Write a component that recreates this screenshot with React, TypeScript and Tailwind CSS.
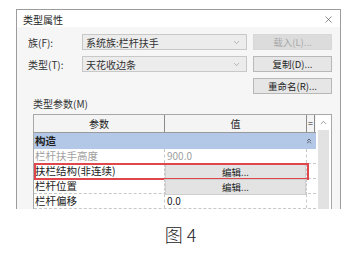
import { ChevronDown, ChevronUp, ChevronsUp, X } from "lucide-react";

const font = { fontFamily: '"Noto Sans CJK SC", "Noto Sans", sans-serif' };

function Dropdown({ value }: { value: string }) {
  return (
    <div className="flex h-[16px] w-[165px] items-center justify-between border border-[#c8c8c8] bg-[#ececec] pl-[3px] pr-[5px] text-[10px] text-[#333]">
      <span>{value}</span>
      <ChevronDown className="h-[9px] w-[9px] text-[#888]" strokeWidth={1.5} />
    </div>
  );
}

function Btn({ label, disabled }: { label: string; disabled?: boolean }) {
  return (
    <div
      className={`flex h-[16px] w-[79px] items-center justify-center border text-[9.5px] ${
        disabled
          ? "border-[#d8d8d8] bg-[#dcdcdc] text-[#a8a8a8]"
          : "border-[#b8b8b8] bg-[#e6e6e6] text-[#222]"
      }`}
    >
      {label}
    </div>
  );
}

function Row({
  name,
  value,
  muted,
  edit,
  highlight,
}: {
  name: string;
  value?: string;
  muted?: boolean;
  edit?: boolean;
  highlight?: boolean;
}) {
  return (
    <div className="relative grid h-[15px] grid-cols-[131px_142px_8px] border-b border-dashed border-[#c8c8c8] text-[10.5px] leading-[14px]">
      <div className={`border-r border-dashed border-[#c8c8c8] pl-[1px] ${muted ? "text-[#a0a0a0]" : "text-[#222]"}`}>
        {name}
      </div>
      <div className={`border-r border-dashed border-[#c8c8c8] ${muted ? "text-[#a0a0a0]" : "text-[#222]"}`}>
        {edit ? (
          <div className="flex h-full items-center justify-center border border-[#cfcfcf] bg-[#e3e3e3] text-[9.5px]">
            编辑...
          </div>
        ) : (
          <span className="pl-[2px] text-[10px]">{value}</span>
        )}
      </div>
      <div />
      {highlight && (
        <div className="absolute -top-[1px] left-0 h-[17px] w-[275px] border-2 border-[#e0474c]" />
      )}
    </div>
  );
}

export default function App() {
  return (
    <div className="h-[260px] w-[361px] overflow-hidden bg-white pt-[9px]" style={font}>
      <div className="ml-[16px] flex h-[200px] w-[325px] flex-col border-x border-t border-[#9c9c9c] bg-[#f6f6f6]">
        <div className="flex h-[24px] items-center justify-between bg-white pl-[6px] pr-[6px] pt-[2px] text-[10px] text-[#222]">
          <span>类型属性</span>
          <X className="h-[11px] w-[11px] text-[#444]" strokeWidth={1.3} />
        </div>

        <div className="flex flex-col gap-[6px] pl-[11px] pr-[8px] pt-[7px]">
          <div className="flex items-center">
            <span className="w-[54px] text-[10px] text-[#333]">族(F):</span>
            <Dropdown value="系统族:栏杆扶手" />
            <div className="ml-[6px]">
              <Btn label="载入(L)..." disabled />
            </div>
          </div>
          <div className="flex items-center">
            <span className="w-[54px] text-[10px] text-[#333]">类型(T):</span>
            <Dropdown value="天花收边条" />
            <div className="ml-[6px]">
              <Btn label="复制(D)..." />
            </div>
          </div>
          <div className="flex justify-end">
            <Btn label="重命名(R)..." />
          </div>
        </div>

        <div className="mt-[3px] pl-[16px] text-[10px] leading-[14px] text-[#333]">类型参数(M)</div>

        <div className="ml-[16px] mt-[3px] flex w-[299px] flex-1 border border-b-0 border-[#a8a8a8] bg-white">
          <div className="w-[282px]">
            <div className="grid h-[18px] grid-cols-[131px_142px_8px] border-b border-[#9a9a9a] bg-[#f4f4f4] text-[10px] text-[#222]">
              <div className="flex items-center justify-center border-r border-[#8a8a8a]">参数</div>
              <div className="flex items-center justify-center border-r border-[#8a8a8a]">值</div>
              <div className="flex items-center justify-center border-r border-[#8a8a8a] text-[9px]">=</div>
            </div>
            <div className="flex h-[16px] items-center justify-between bg-[#b3c8e6] pl-[1px] pr-[3px] text-[10.5px] font-bold text-[#222]">
              <span>构造</span>
              <ChevronsUp className="h-[8px] w-[8px] text-[#333]" strokeWidth={2} />
            </div>
            <Row name="栏杆扶手高度" value="900.0" muted />
            <Row name="扶栏结构(非连续)" edit highlight />
            <Row name="栏杆位置" edit />
            <Row name="栏杆偏移" value="0.0" />
          </div>
          <div className="flex w-[15px] flex-col">
            <div className="flex h-[15px] items-center justify-center bg-white">
              <ChevronUp className="h-[9px] w-[9px] text-[#555]" strokeWidth={1.6} />
            </div>
            <div className="mx-[2px] flex-1 bg-[#e2e2e2]" />
          </div>
        </div>
      </div>

      <div className="flex justify-center pt-[16px] text-[18px] font-light leading-none text-[#222]">
        图 4
      </div>
    </div>
  );
}
